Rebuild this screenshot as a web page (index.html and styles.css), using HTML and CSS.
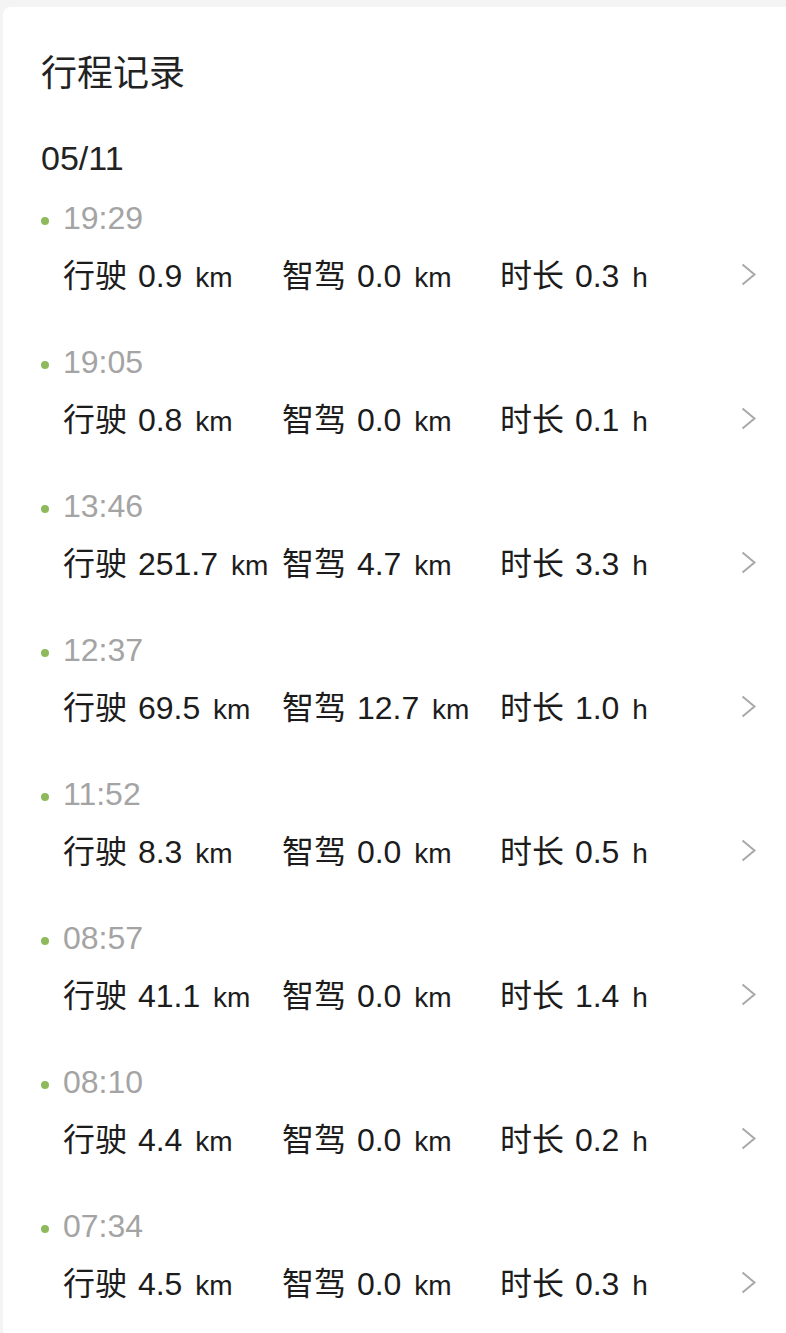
FILE: index.html
```html
<!DOCTYPE html>
<html lang="zh-CN">
<head>
<meta charset="utf-8">
<title>行程记录</title>
<link rel="stylesheet" href="styles.css">
</head>
<body>
<div class="card">
  <h1 class="title">行程记录</h1>
  <div class="date">05/11</div>
  <ul class="trips">
    <li class="trip">
      <div class="time">19:29</div>
      <div class="row">
        <span class="stat">行驶 0.9 <small>km</small></span>
        <span class="stat">智驾 0.0 <small>km</small></span>
        <span class="stat">时长 0.3 <small>h</small></span>
        <svg class="chev" viewBox="0 0 15 23" width="15" height="23"><polyline points="1.5,1.5 13.5,11.5 1.5,21.5"/></svg>
      </div>
    </li>
    <li class="trip">
      <div class="time">19:05</div>
      <div class="row">
        <span class="stat">行驶 0.8 <small>km</small></span>
        <span class="stat">智驾 0.0 <small>km</small></span>
        <span class="stat">时长 0.1 <small>h</small></span>
        <svg class="chev" viewBox="0 0 15 23" width="15" height="23"><polyline points="1.5,1.5 13.5,11.5 1.5,21.5"/></svg>
      </div>
    </li>
    <li class="trip">
      <div class="time">13:46</div>
      <div class="row">
        <span class="stat">行驶 251.7 <small>km</small></span>
        <span class="stat">智驾 4.7 <small>km</small></span>
        <span class="stat">时长 3.3 <small>h</small></span>
        <svg class="chev" viewBox="0 0 15 23" width="15" height="23"><polyline points="1.5,1.5 13.5,11.5 1.5,21.5"/></svg>
      </div>
    </li>
    <li class="trip">
      <div class="time">12:37</div>
      <div class="row">
        <span class="stat">行驶 69.5 <small>km</small></span>
        <span class="stat">智驾 12.7 <small>km</small></span>
        <span class="stat">时长 1.0 <small>h</small></span>
        <svg class="chev" viewBox="0 0 15 23" width="15" height="23"><polyline points="1.5,1.5 13.5,11.5 1.5,21.5"/></svg>
      </div>
    </li>
    <li class="trip">
      <div class="time">11:52</div>
      <div class="row">
        <span class="stat">行驶 8.3 <small>km</small></span>
        <span class="stat">智驾 0.0 <small>km</small></span>
        <span class="stat">时长 0.5 <small>h</small></span>
        <svg class="chev" viewBox="0 0 15 23" width="15" height="23"><polyline points="1.5,1.5 13.5,11.5 1.5,21.5"/></svg>
      </div>
    </li>
    <li class="trip">
      <div class="time">08:57</div>
      <div class="row">
        <span class="stat">行驶 41.1 <small>km</small></span>
        <span class="stat">智驾 0.0 <small>km</small></span>
        <span class="stat">时长 1.4 <small>h</small></span>
        <svg class="chev" viewBox="0 0 15 23" width="15" height="23"><polyline points="1.5,1.5 13.5,11.5 1.5,21.5"/></svg>
      </div>
    </li>
    <li class="trip">
      <div class="time">08:10</div>
      <div class="row">
        <span class="stat">行驶 4.4 <small>km</small></span>
        <span class="stat">智驾 0.0 <small>km</small></span>
        <span class="stat">时长 0.2 <small>h</small></span>
        <svg class="chev" viewBox="0 0 15 23" width="15" height="23"><polyline points="1.5,1.5 13.5,11.5 1.5,21.5"/></svg>
      </div>
    </li>
    <li class="trip">
      <div class="time">07:34</div>
      <div class="row">
        <span class="stat">行驶 4.5 <small>km</small></span>
        <span class="stat">智驾 0.0 <small>km</small></span>
        <span class="stat">时长 0.3 <small>h</small></span>
        <svg class="chev" viewBox="0 0 15 23" width="15" height="23"><polyline points="1.5,1.5 13.5,11.5 1.5,21.5"/></svg>
      </div>
    </li>
  </ul>
</div>
</body>
</html>
```
FILE: styles.css
```css
html, body {
  margin: 0;
  padding: 0;
  background: #f4f4f4;
}
body {
  font-family: "Liberation Sans", "Noto Sans CJK SC", sans-serif;
  color: #1c1c1c;
  overflow: hidden;
  height: 1333px;
}
.card {
  margin: 7px 0 0 3px;
  background: #ffffff;
  border-radius: 8px 0 0 0;
  padding: 43px 0 0 38px;
  min-height: 1400px;
}
.title {
  margin: 0;
  font-size: 36px;
  font-weight: 400;
  line-height: 48px;
  color: #222222;
}
.date {
  margin-top: 40px;
  font-size: 34px;
  line-height: 40px;
  color: #222222;
}
.trips {
  list-style: none;
  margin: 20px 0 0 0;
  padding: 0;
}
.trip {
  height: 144px;
}
.time {
  display: flex;
  align-items: center;
  font-size: 32px;
  line-height: 40px;
  color: #a4a4a4;
}
.time::before {
  content: "";
  width: 8px;
  height: 8px;
  border-radius: 50%;
  background: #8fba5c;
  margin: 6px 14px 0 0;
}
.row {
  margin-top: 19px;
  display: flex;
  align-items: center;
  height: 40px;
  padding-left: 22px;
  padding-right: 30px;
  font-size: 32px;
  line-height: 40px;
  color: #1c1c1c;
}
.stat {
  white-space: nowrap;
  width: 219px;
  flex: none;
  word-spacing: 2px;
}
.stat:nth-child(2) {
  width: 218px;
}
.stat small {
  font-size: 28px;
  margin-left: 2px;
}
.chev {
  margin-left: auto;
  margin-top: -6px;
  fill: none;
  stroke: #a8a8a8;
  stroke-width: 2;
}
```
